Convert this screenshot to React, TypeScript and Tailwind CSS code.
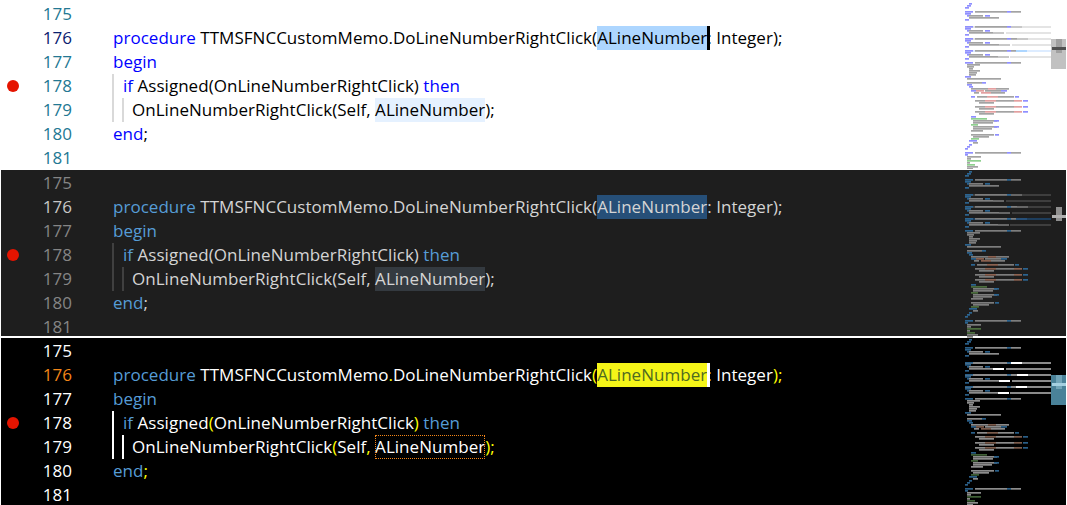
type Kind = "k" | "t" | "s" | "c";

interface Theme {
  panel: string;
  number: string;
  active: string;
  keyword: string;
  text: string;
  punct: string;
  guide: string;
  selection: string;
  selectionText: string;
  word: string;
  cursor: string;
  map: Record<Kind, string>;
  band: string;
  hit: string;
  hitBand: string;
  hitCurrent: string;
  slider: string;
  sliderInner: string;
  sliderBar: string;
  mapTop: number;
}

const light: Theme = {
  panel: "h-[170px] pt-[2px] bg-white",
  number: "text-[#237893]",
  active: "text-[#0b216f]",
  keyword: "text-[#0000ff]",
  text: "text-black",
  punct: "text-black",
  guide: "border-[#d9d9d9]",
  selection: "bg-[#add6ff]",
  selectionText: "text-black",
  word: "bg-[#e5f1ff]",
  cursor: "bg-black",
  map: { k: "#8f8fff", t: "#a3a3a3", s: "#e3a0a0", c: "#8fd08f" },
  band: "#e4e4e4",
  hit: "#c8c8c8",
  hitBand: "#ddecff",
  hitCurrent: "#add6ff",
  slider: "#c1c1c1",
  sliderInner: "#a0a0a0",
  sliderBar: "#505050",
  mapTop: 0,
};

const dark: Theme = {
  panel: "h-[166px] pt-px bg-[#1e1e1e]",
  number: "text-[#858585]",
  active: "text-[#c6c6c6]",
  keyword: "text-[#569cd6]",
  text: "text-[#d4d4d4]",
  punct: "text-[#d4d4d4]",
  guide: "border-[#404040]",
  selection: "bg-[#264f78]",
  selectionText: "text-[#d4d4d4]",
  word: "bg-[#343a40]",
  cursor: "bg-transparent",
  map: { k: "#2c6490", t: "#7d7d7d", s: "#8c6250", c: "#4c6e3e" },
  band: "#3e3e3e",
  hit: "#666666",
  hitBand: "#1d3d5c",
  hitCurrent: "#264f78",
  slider: "transparent",
  sliderInner: "#8f8f8f",
  sliderBar: "#b0b0b0",
  mapTop: 1,
};

const contrast: Theme = {
  panel: "h-[167px] pt-px bg-black",
  number: "text-white",
  active: "text-[#f38518]",
  keyword: "text-[#569cd6]",
  text: "text-white",
  punct: "text-[#ffff00]",
  guide: "border-white",
  selection: "bg-[#f5f518]",
  selectionText: "text-[#4f6a20]",
  word: "outline-1 outline-dotted outline-[#f38518] -outline-offset-1",
  cursor: "bg-white",
  map: { k: "#2a5f88", t: "#8c8c8c", s: "#7c5c4c", c: "#3f6036" },
  band: "#8a8a8a",
  hit: "#ffffff",
  hitBand: "#8a8a8a",
  hitCurrent: "#ffffff",
  slider: "#4a8299",
  sliderInner: "#72a5b9",
  sliderBar: "#a4cfe0",
  mapTop: 1,
};

// minimap rows: y, x, width, token kind
function method(y: number): [number, number, number, Kind][] {
  return [
    [y, 18, 8, "k"],
    [y, 28, 32, "t"],
    [y, 60, 4, "k"],
    [y, 64, 10, "t"],
    [y + 2, 18, 6, "k"],
    [y + 4, 20, 2, "k"],
    [y + 4, 22, 14, "t"],
    [y + 4, 38, 5, "k"],
    [y + 6, 22, 30, "t"],
    [y + 8, 18, 4, "k"],
  ];
}

const mapRows: [number, number, number, Kind][] = [
  [1, 22, 3, "k"],
  [3, 20, 4, "k"],
  [5, 18, 4, "k"],
  ...method(9),
  ...method(24),
  ...method(36),
  ...method(48),
  ...method(60).slice(0, 4),
  [62, 20, 13, "t"],
  [64, 20, 7, "t"],
  [66, 22, 4, "t"],
  [68, 22, 11, "t"],
  [70, 22, 8, "t"],
  [72, 22, 7, "t"],
  [74, 18, 6, "k"],
  [76, 20, 34, "t"],
  [80, 20, 15, "t"],
  [80, 35, 4, "k"],
  [82, 20, 5, "k"],
  [84, 22, 4, "k"],
  [86, 24, 17, "t"],
  [86, 41, 8, "s"],
  [86, 49, 13, "t"],
  [88, 24, 5, "k"],
  [88, 29, 8, "s"],
  [88, 38, 16, "t"],
  [88, 54, 6, "k"],
  [90, 27, 5, "t"],
  [90, 34, 10, "s"],
  [90, 44, 14, "t"],
  [94, 24, 4, "k"],
  [94, 30, 10, "t"],
  [94, 40, 11, "s"],
  [94, 51, 16, "t"],
  [94, 68, 4, "k"],
  [98, 28, 10, "t"],
  [98, 38, 11, "s"],
  [98, 49, 18, "t"],
  [98, 67, 8, "s"],
  [98, 76, 5, "k"],
  [100, 32, 15, "t"],
  [104, 28, 10, "t"],
  [104, 38, 11, "s"],
  [104, 49, 18, "t"],
  [104, 67, 8, "s"],
  [104, 76, 5, "k"],
  [106, 32, 15, "t"],
  [109, 28, 10, "t"],
  [109, 38, 11, "s"],
  [109, 49, 18, "t"],
  [109, 67, 8, "s"],
  [109, 76, 5, "k"],
  [111, 32, 15, "t"],
  [114, 24, 5, "k"],
  [116, 24, 16, "c"],
  [118, 26, 24, "t"],
  [118, 47, 5, "k"],
  [120, 26, 20, "t"],
  [122, 24, 7, "c"],
  [124, 26, 24, "t"],
  [124, 47, 5, "k"],
  [126, 26, 19, "t"],
  [128, 24, 12, "t"],
  [132, 24, 23, "t"],
  [132, 48, 4, "k"],
  [134, 26, 16, "t"],
  [136, 24, 8, "c"],
  [138, 22, 8, "k"],
  [140, 26, 5, "t"],
  [142, 22, 3, "k"],
  [144, 20, 3, "k"],
  [146, 18, 3, "k"],
  ...method(150).slice(0, 4),
  [152, 18, 3, "k"],
  [154, 20, 14, "t"],
  [156, 20, 4, "t"],
  [158, 20, 14, "c"],
  [160, 20, 3, "t"],
  [162, 20, 8, "c"],
  [164, 20, 11, "t"],
  [166, 20, 6, "t"],
];

function Minimap({ theme }: { theme: Theme }) {
  return (
    <svg width="119" height="167" viewBox={`0 ${theme.mapTop} 119 167`} className="shrink-0">
      <rect x="18" y="24" width="86" height="2" fill={theme.band} />
      <rect x="59" y="30" width="45" height="2" fill={theme.band} />
      <rect x="18" y="36" width="86" height="2" fill={theme.band} />
      <rect x="65" y="42" width="39" height="2" fill={theme.band} />
      <rect x="18" y="48" width="86" height="2" fill={theme.hitBand} />
      <rect x="63" y="54" width="41" height="2" fill={theme.band} />
      {mapRows.map(([y, x, w, kind], i) => (
        <rect key={i} x={x} y={y} width={w} height="1.7" fill={theme.map[kind]} />
      ))}
      <rect x="64" y="24" width="11" height="2" fill={theme.hit} />
      <rect x="46" y="30" width="11" height="2" fill={theme.hit} />
      <rect x="70" y="36" width="11" height="2" fill={theme.hit} />
      <rect x="52" y="42" width="11" height="2" fill={theme.hit} />
      <rect x="69" y="48" width="11" height="2" fill={theme.hitCurrent} />
      <rect x="51" y="54" width="11" height="2" fill={theme.hit} />
      {/* scrollbar slider */}
      <rect x="104" y="37" width="15" height="30" fill={theme.slider} />
      <rect x="109" y="37" width="6" height="14" fill={theme.sliderInner} />
      <rect x="105" y="45" width="14" height="3" fill={theme.sliderBar} />
    </svg>
  );
}

function Gutter({ n, theme, dot }: { n: number; theme: Theme; dot?: boolean }) {
  return (
    <div className="flex w-[111px] shrink-0 items-center">
      <div className="flex w-6 justify-center">
        {dot && <div className="h-3 w-3 rounded-full bg-[#e51400]" />}
      </div>
      <div className={`w-[47px] text-right ${n === 176 ? theme.active : theme.number}`}>{n}</div>
    </div>
  );
}

function Editor({ theme }: { theme: Theme }) {
  const P = ({ children }: { children: string }) => <span className={theme.punct}>{children}</span>;
  const K = ({ children }: { children: string }) => <span className={theme.keyword}>{children}</span>;

  return (
    <div className={`flex ${theme.panel}`}>
      <div className={`min-w-0 flex-1 whitespace-pre font-['Open_Sans',sans-serif] text-[17px] leading-6 tracking-[0.03px] ${theme.text}`}>
        <div className="flex h-6">
          <Gutter n={175} theme={theme} />
        </div>
        <div className="flex h-6">
          <Gutter n={176} theme={theme} />
          <div className="pl-px">
            <K>procedure</K> TTMSFNCCustomMemo<P>.</P>DoLineNumberRightClick<P>(</P>
            <span className={`relative inline-block h-6 ${theme.selection} ${theme.selectionText}`}>
              ALineNumber
              <span className={`absolute top-0 right-[-3px] h-6 w-[3px] ${theme.cursor}`} />
            </span>
            <P>:</P> Integer<P>);</P>
          </div>
        </div>
        <div className="flex h-6">
          <Gutter n={177} theme={theme} />
          <div className="pl-px">
            <K>begin</K>
          </div>
        </div>
        <div className="flex h-6">
          <Gutter n={178} theme={theme} dot />
          <div className={`border-l-2 pl-[9px] ${theme.guide}`}>
            <K>if</K> Assigned<P>(</P>OnLineNumberRightClick<P>)</P> <K>then</K>
          </div>
        </div>
        <div className="flex h-6">
          <Gutter n={179} theme={theme} />
          <div className={`border-l-2 pl-2 ${theme.guide}`}>
            <div className={`border-l-2 pl-2 ${theme.guide}`}>
              OnLineNumberRightClick<P>(</P>Self<P>,</P> <span className={`inline-block h-6 ${theme.word}`}>ALineNumber</span>
              <P>);</P>
            </div>
          </div>
        </div>
        <div className="flex h-6">
          <Gutter n={180} theme={theme} />
          <div className="pl-px">
            <K>end</K>
            <P>;</P>
          </div>
        </div>
        <div className="flex h-[21px] pt-[3px] leading-[18px]">
          <Gutter n={181} theme={theme} />
        </div>
      </div>
      <Minimap theme={theme} />
    </div>
  );
}

export default function App() {
  return (
    <div className="h-[505px] w-[1067px] overflow-hidden bg-white px-px">
      <Editor theme={light} />
      <Editor theme={dark} />
      <div className="h-[2px]" />
      <Editor theme={contrast} />
    </div>
  );
}
